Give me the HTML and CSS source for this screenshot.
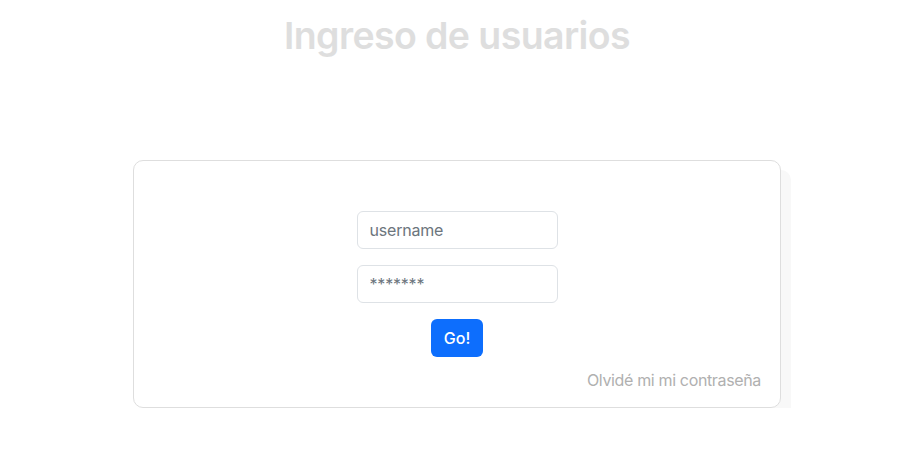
FILE: index.html
```html
<!DOCTYPE html>
<html lang="es">
<head>
<meta charset="utf-8">
<title>Ingreso de usuarios</title>
<link rel="stylesheet" href="styles.css">
</head>
<body>
<div class="page">
  <h1 class="title">Ingreso de usuarios</h1>
  <div class="card">
    <form class="login-form">
      <input class="field" type="text" placeholder="username">
      <input class="field" type="text" placeholder="*******">
      <button class="btn" type="button">Go!</button>
    </form>
    <div class="forgot"><a href="#">Olvidé mi mi contraseña</a></div>
  </div>
</div>
</body>
</html>
```

FILE: styles.css
```css
* { box-sizing: border-box; }
html, body { margin: 0; padding: 0; background: #fff; }
body {
  font-family: Inter, "Noto Sans", "Liberation Sans", sans-serif;
  font-size: 16px;
  color: #212529;
}
.page {
  padding: 12px 10px 0 0;
  display: flex;
  flex-direction: column;
  align-items: center;
}
.title {
  margin: 0;
  font-size: 37.5px;
  line-height: 48px;
  font-weight: 600;
  color: #dedede;
  letter-spacing: -0.6px;
}
.card {
  margin-top: 100px;
  width: 648px;
  border: 1px solid #dedede;
  border-radius: 10px;
  box-shadow: 10px 10px 0 #f8f8f8;
  padding: 50px 19px 15px 19px;
  background: #fff;
}
.login-form {
  display: flex;
  flex-direction: column;
  align-items: center;
  gap: 16px;
}
.field {
  width: 201px;
  height: 38px;
  border: 1px solid #dee2e6;
  border-radius: 6px;
  padding: 6px 12px;
  font-family: inherit;
  font-size: 16px;
  letter-spacing: -0.2px;
  color: #212529;
  outline: none;
}
.field::placeholder { color: #6c757d; opacity: 1; }
.btn {
  width: 52px;
  height: 38px;
  border: none;
  border-radius: 6px;
  background: #0d6efd;
  color: #fff;
  font-family: inherit;
  font-size: 16px;
  font-weight: 500;
  padding: 0;
}
.forgot {
  margin-top: 11px;
  text-align: right;
  line-height: 24px;
}
.forgot a {
  color: #b0b0b0;
  text-decoration: none;
  letter-spacing: -0.35px;
}
```
